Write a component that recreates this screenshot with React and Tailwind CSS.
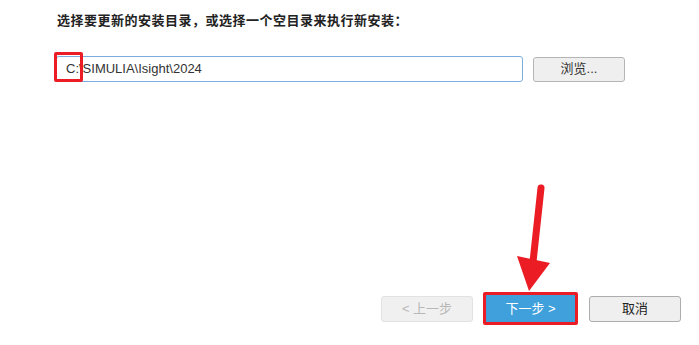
export default function App() {
  return (
    <div className="relative w-[699px] h-[345px] bg-white overflow-hidden flex flex-col font-['Liberation_Sans','Noto_Sans_CJK_SC',sans-serif] text-[#222]">
      <div className="pt-[12px] pl-[57px] text-[13px] leading-[18px] font-bold tracking-[0.5px]">
        选择要更新的安装目录，或选择一个空目录来执行新安装：
      </div>

      <div className="mt-[26px] pl-[56px] flex items-center">
        <div className="w-[467px] h-[26px] border border-[#7aaddd] rounded-[3px] flex items-center pl-[9px] text-[13px] text-[#333]">
          C:\SIMULIA\Isight\2024
        </div>
        <button className="ml-[10px] w-[92px] h-[25px] bg-[#efefef] border border-[#b5b5b5] rounded-[3px] text-[13px] text-[#333]">
          浏览...
        </button>
      </div>

      <div className="mt-auto mb-[20px] pr-[18px] flex justify-end items-center">
        <button className="w-[92px] h-[26px] bg-[#f0f0f0] border border-[#e2e2e2] rounded-[3px] text-[13px] text-[#b8b8b8]">
          &lt; 上一步
        </button>
        <div className="ml-[10px] p-[3px] bg-[#ec1c24] rounded-[2px]">
          <button className="w-[89px] h-[27px] bg-[#40a0dc] text-[13px] text-white">
            下一步 &gt;
          </button>
        </div>
        <button className="ml-[11px] w-[92px] h-[26px] bg-[#efefef] border border-[#adadad] rounded-[3px] text-[13px] text-[#222]">
          取消
        </button>
      </div>

      <div className="absolute left-[54px] top-[52px] w-[29px] h-[30px] border-[3px] border-[#ec1c24] rounded-[2px]" />

      <svg className="absolute left-0 top-0" width="699" height="345" viewBox="0 0 699 345">
        <line x1="541" y1="188" x2="533" y2="262" stroke="#ec1c24" strokeWidth="7" strokeLinecap="round" />
        <polygon points="517,256 550,263 529,291" fill="#ec1c24" />
      </svg>
    </div>
  );
}
